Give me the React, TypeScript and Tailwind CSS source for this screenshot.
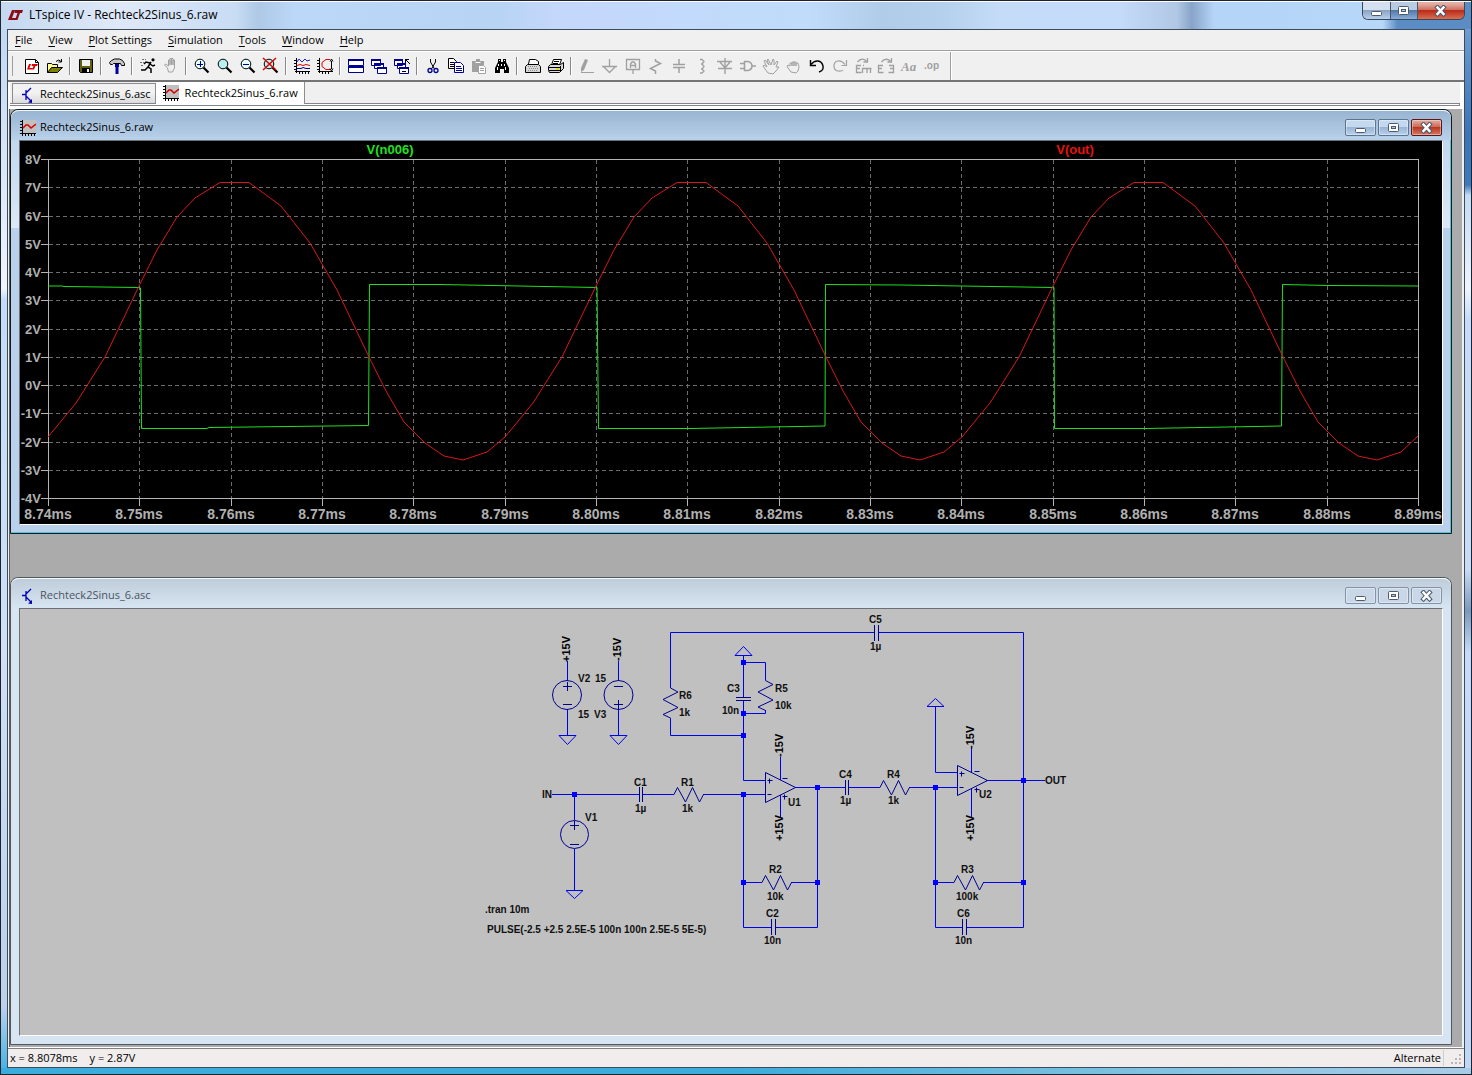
import type { ReactNode } from "react";

const BLUE = "#0000f0";
const NAVY = "#000090";
const GREY = "#a0a0a0";

/* ---------- toolbar icons ---------- */

const icons: Record<string, ReactNode> = {
  "New Schematic": (
    <>
      <path d="M1.5 1.5h10l3 3v11h-13z" fill="#fff" stroke="#000" />
      <path d="M11.5 1.5v3h3" fill="none" stroke="#000" />
      <path d="M5 6h2l-1.5 4h3l-.5 1.5h-5zM8 6h6l-1 2h-1.5l-1.5 3.5h-2l1.5-3.5h-2z" fill="#e00000" />
    </>
  ),
  Open: (
    <>
      <path d="M.5 14.5v-9h4l1 1h5v3" fill="#ffff90" stroke="#000" />
      <path d="M.5 14.5l4-5h11l-5 5z" fill="#808000" stroke="#000" />
      <path d="M9 3.5q3-3 5 0M14.5 1v3h-3" fill="none" stroke="#000" />
    </>
  ),
  Save: (
    <>
      <path d="M1.5 1.5h13v13h-12l-1-1z" fill="#606010" stroke="#000" />
      <path d="M4 2h8v6h-8z" fill="#f0f0f0" />
      <path d="M4 10h8v5h-8z" fill="#000" />
      <path d="M9 11h2v3h-2z" fill="#f0f0f0" />
    </>
  ),
  "Control Panel": (
    <>
      <path d="M.5 4.5l2-2 3-1.5h5l3 1.5 2 3v2h-3l-1-2h-7l-1 1h-2z" fill="#c8c8c8" stroke="#000" />
      <path d="M6 6h4v3h-.5v7h-3v-7h-.5z" fill="#0000a0" />
    </>
  ),
  Run: (
    <>
      <circle cx="13" cy="1.8" r="1.6" fill="#000" />
      <path d="M11 4l-3 5 3 2v4M8 9l-3 3h-4M10 5l-4-1-2 2M10 6l3 2 2-1" fill="none" stroke="#000" strokeWidth="1.5" />
      <path d="M0 4.5h4M1 7.5h3M2 1.5h4" stroke="#707070" strokeDasharray="2 1" />
    </>
  ),
  Halt: (
    <path d="M4.5 10l-3-3 1-1 3 2v-6h1.5v5-6.5h1.5v6-6h1.5v6.5-5h1.5v8l-2 4h-4z" fill="none" stroke={GREY} />
  ),
  "Zoom In": (
    <>
      <circle cx="6" cy="6" r="4.8" fill="#e8ffff" stroke="#000" />
      <path d="M3 6.5h6M6.5 3v6" stroke={NAVY} />
      <path d="M9.5 9.5l5 5" stroke="#000" strokeWidth="2.2" />
    </>
  ),
  "Zoom Box": (
    <>
      <circle cx="6" cy="6" r="4.8" fill="#b8f0f0" stroke="#000" />
      <path d="M9.5 9.5l5 5" stroke="#000" strokeWidth="2.2" />
    </>
  ),
  "Zoom Out": (
    <>
      <circle cx="6" cy="6" r="4.8" fill="#e8ffff" stroke="#000" />
      <path d="M3 6.5h6" stroke={NAVY} />
      <path d="M9.5 9.5l5 5" stroke="#000" strokeWidth="2.2" />
    </>
  ),
  "Zoom Fit": (
    <>
      <circle cx="6" cy="6" r="4.8" fill="#b8f0f0" stroke="#000" />
      <path d="M9.5 9.5l5 5" stroke="#000" strokeWidth="2.2" />
      <path d="M0 0l13 12M13 0l-13 12" stroke="#e00000" strokeWidth="1.5" />
    </>
  ),
  "Autorange Y": (
    <>
      <path d="M2.5 0v15M1 13.5h15M0 2.5h2M0 5.5h2M0 8.5h2M0 11.5h2M5.5 14v2M8.5 14v2M11.5 14v2M14.5 14v2" stroke="#000" fill="none" />
      <path d="M3 4l2-3 3 3 3-3 2 2 3-1" stroke="#2020c0" fill="none" />
      <path d="M3 7.5l3-1 3 1 3-1 4 1" stroke="#e00000" fill="none" />
      <path d="M3 10.5h4l2-1 3 1h4" stroke={NAVY} fill="none" />
    </>
  ),
  "Pick Traces": (
    <>
      <path d="M2.5 0v15M1 13.5h15M0 2.5h2M0 5.5h2M0 8.5h2M0 11.5h2M5.5 14v2M8.5 14v2M11.5 14v2" stroke="#000" fill="none" />
      <path d="M14.5 3v8M13 3.5l1.5-2.5 1.5 2.5M13 10.5l1.5 2.5 1.5-2.5" stroke="#000" fill="none" />
      <path d="M13 1.5h-4l-4 3v4l4 3h4" stroke="#e00000" fill="none" />
    </>
  ),
  "Tile Windows": (
    <>
      <path d="M.5 1.5h15v6h-15zM.5 8.5h15v6h-15z" fill="#fff" stroke={NAVY} />
      <path d="M0 1h16v2h-16zM0 8h16v2h-16z" fill={NAVY} />
    </>
  ),
  "Cascade Windows": (
    <>
      <path d="M.5 1.5h9v6h-9zM3.5 5.5h9v5h-9zM6.5 9.5h9v6h-9z" fill="#fff" stroke={NAVY} />
      <path d="M0 1h10v2h-10zM3 5h10v2h-10zM6 9h10v2h-10z" fill={NAVY} />
    </>
  ),
  "Close All Windows": (
    <>
      <path d="M.5 1.5h8v6h-8zM3.5 5.5h8v5h-8zM5.5 9.5h9v6h-9z" fill="#fff" stroke={NAVY} />
      <path d="M0 1h9v2h-9zM3 5h9v2h-9zM5 9h10v2h-10z" fill={NAVY} />
      <path d="M11 1.5h4M11.5 1v4M12 2l4 4M8 13.5h4" stroke="#000" />
    </>
  ),
  Cut: (
    <>
      <path d="M5.5 1v3l4 7M10.5 1v3l-4 7" stroke="#000" fill="none" />
      <circle cx="5" cy="12.5" r="2" fill="none" stroke={NAVY} strokeWidth="1.3" />
      <circle cx="11" cy="12.5" r="2" fill="none" stroke={NAVY} strokeWidth="1.3" />
    </>
  ),
  Copy: (
    <>
      <path d="M.5 .5h5l3 3v7h-8z" fill="#fff" stroke="#000" />
      <path d="M2 4.5h4M2 6.5h4M2 8.5h4" stroke="#000" />
      <path d="M6.5 4.5h6l3 3v7h-9z" fill="#fff" stroke={NAVY} />
      <path d="M8 8.5h5M8 10.5h6M8 12.5h6" stroke={NAVY} />
    </>
  ),
  Paste: (
    <>
      <path d="M1 3h4v-2h4v2h4v4h-5v7h-7z" fill={GREY} />
      <path d="M4.5 4.5h5" stroke="#fff" />
      <path d="M7.5 7.5h5l2 2v6h-7z" fill="#fff" stroke={GREY} />
      <path d="M9 10.5h4M9 12.5h4" stroke={GREY} />
    </>
  ),
  Find: (
    <>
      <path d="M4 1h3v3h2v-3h3v3l2 4 1 2v5h-5v-4h-4v4h-5v-5l1-2 2-4z" fill="#000" />
      <path d="M5.5 2v1M10.5 2v1M4.5 6v2M3.5 9v3M10.5 6v2M11.5 9v3M7.5 6v2" stroke="#fff" />
    </>
  ),
  "Page Setup": (
    <>
      <path d="M3.5 6l1-4.5h6l3 2v2.5" fill="#fff" stroke="#000" />
      <path d="M.5 8.5l2-2h11l2 2v6h-15z" fill="#d8d8d8" stroke="#000" />
      <path d="M3 8.5h10M4 10.5h9M3 12.5h10" stroke="#909090" strokeDasharray="1 1" />
    </>
  ),
  Print: (
    <>
      <path d="M3.5 7l2-5.5h8l-2 5.5" fill="#fff" stroke="#000" />
      <path d="M6 3.5h5M5 5.5h5" stroke="#000" />
      <path d="M.5 8.5l2-2h10l3-2v6l-4 4h-10l-1-2z" fill="#d8d8d8" stroke="#000" />
      <path d="M1 9.5h11M1 12.5h11M12.5 8v6" stroke="#000" />
      <path d="M8 10h3v2h-3z" fill="#e0e000" />
    </>
  ),
  "Draw Wire": (
    <>
      <path d="M6 1l3 1-4 10-3 2v-4z" fill={GREY} />
      <path d="M2 14.5h13" stroke={GREY} />
    </>
  ),
  Ground: <path d="M7.5 1v7M0 8.5h15M1.5 8.5l6 6 6-6" fill="none" stroke={GREY} strokeWidth="1.3" />,
  "Label Net": (
    <>
      <path d="M1.5 1.5h13v10h-13zM8 12v4" fill="none" stroke={GREY} strokeWidth="1.3" />
      <path d="M5.5 10v-4l1.5-2h2l1.5 2v4M6 7.5h4" fill="none" stroke={GREY} strokeWidth="1.3" />
    </>
  ),
  Resistor: <path d="M7.5 1v2l5 2.5-10 5 5 2.5v3" fill="none" stroke={GREY} strokeWidth="1.5" />,
  Capacitor: <path d="M8 1v5M8 10v5M2 6.5h12M2 9.5h12" fill="none" stroke={GREY} strokeWidth="1.5" />,
  Inductor: <path d="M6 1.5h2l2 2-2 2.5h-1 1l2 2.5-2 2.5h-1 1l2 2-2 2h-2" fill="none" stroke={GREY} strokeWidth="1.3" />,
  Diode: <path d="M8 0v16M0 3.5h15M3 4l5 6 5-6M1 10.5h14" fill="none" stroke={GREY} strokeWidth="1.4" />,
  Component: (
    <path d="M0 5.5h4M0 10.5h4M4.5 3v10M4 3.5h4q4 1 4 4.5t-4 4.5h-4M12 8h4" fill="none" stroke={GREY} strokeWidth="1.6" />
  ),
  Move: (
    <path d="M5 15l-3-4-2-3 1-1 3 2-3-6 1-1 4 5-2-5 1-1 3 6 2-6 1 1v5l3-4 1 1-2 5 3 0-3 4-3 3z" fill="none" stroke={GREY} />
  ),
  Drag: (
    <path d="M5 14l-3-4-1-2 1-1 2 1v-3h2v3-4h2v4-4h2v4-3h2l1 4-1 4-2 2z" fill="none" stroke={GREY} />
  ),
  Undo: (
    <>
      <path d="M2 6.5q3-4 7-3.5t5 5-4 6" fill="none" stroke="#000" strokeWidth="1.4" />
      <path d="M1.5 2v5.5h5.5" fill="none" stroke="#000" strokeWidth="1.4" />
    </>
  ),
  Redo: (
    <>
      <path d="M13 6.5q-3-4-7-3.5t-4 5 4 5 5-1" fill="none" stroke={GREY} strokeWidth="1.2" />
      <path d="M14.5 2v5.5h-5" fill="none" stroke={GREY} strokeWidth="1.2" />
    </>
  ),
  Rotate: (
    <path d="M2.5 4q4-5 9-1M12.5 0v4h-4M6 7.5h-4.5v7h5M1 10.5h4M7.5 15v-4.5h9M12 10v5M15.5 10v5M8 7.5h1" fill="none" stroke={GREY} strokeWidth="1.3" />
  ),
  Mirror: (
    <path d="M3.5 4q4-5 9-1M13.5 0v4h-4M5 7.5h-4.5v7h5M0 10.5h4M11 7.5h4.5v7h-5M12 10.5h4" fill="none" stroke={GREY} strokeWidth="1.3" />
  ),
  Text: (
    <text x="0" y="13" fontSize="13" fontStyle="italic" fontWeight="bold" fontFamily="Liberation Serif, serif" fill={GREY}>Aa</text>
  ),
  "SPICE Directive": (
    <text x="0" y="11" fontSize="10" fontFamily="Liberation Sans, sans-serif" fontWeight="bold" fill={GREY}>.op</text>
  ),
};

const toolGroups = [
  ["New Schematic", "Open"],
  ["Save"],
  ["Control Panel"],
  ["Run", "Halt"],
  ["Zoom In", "Zoom Box", "Zoom Out", "Zoom Fit"],
  ["Autorange Y", "Pick Traces"],
  ["Tile Windows", "Cascade Windows", "Close All Windows"],
  ["Cut", "Copy", "Paste", "Find"],
  ["Page Setup", "Print"],
  [
    "Draw Wire", "Ground", "Label Net", "Resistor", "Capacitor", "Inductor", "Diode", "Component",
    "Move", "Drag", "Undo", "Redo", "Rotate", "Mirror", "Text", "SPICE Directive",
  ],
];

const menus = ["File", "View", "Plot Settings", "Simulation", "Tools", "Window", "Help"];

function Toolbar() {
  return (
    <div className="flex h-[31px] items-stretch border-b-2 border-[#747474] border-t border-t-white pl-1">
      <div className="my-1 mr-[7px] w-px bg-[#a0a0a0]" />
      {toolGroups.map((group, i) => (
        <div key={i} className="flex items-center">
          {i > 0 && <div className="mx-[3px] h-[18px] w-0.5 border-l border-[#888] bg-white" />}
          {group.map((name) => (
            <button key={name} aria-label={name} className="flex h-[22px] w-[23px] items-center justify-center">
              <svg width="16" height="16" viewBox="0 0 16 16" className="overflow-visible">
                {icons[name]}
              </svg>
            </button>
          ))}
        </div>
      ))}
      <div className="ml-[7px] w-0.5 border-l border-[#a0a0a0] bg-white" />
    </div>
  );
}

/* ---------- small document icons ---------- */

function RawIcon() {
  return (
    <svg width="16" height="16" viewBox="0 0 16 16" className="shrink-0">
      <path d="M3 0h13v13h-13z" fill="#c0c0c0" />
      <path d="M2.5 0v16M0 13.5h16M0 1.5h2M0 4.5h2M0 7.5h2M0 10.5h2M5.5 14v2M8.5 14v2M11.5 14v2M14.5 14v2" stroke="#000" />
      <path d="M3 8l3-3h2l3 3 5-4" fill="none" stroke="#d80000" strokeWidth="1.5" />
    </svg>
  );
}

function AscIcon() {
  return (
    <svg width="16" height="16" viewBox="0 0 16 16" className="shrink-0">
      <path d="M6 3v10M2 7.5h4M6 6l5-5M6 9l5 5" fill="none" stroke="#0000b8" strokeWidth="1.3" />
      <path d="M12 16v-4l-4 3.5z" fill="#0000b8" />
    </svg>
  );
}

/* ---------- windows ---------- */

type Glyph = "Minimize" | "Maximize" | "Close";

function WindowGlyph({ kind }: { kind: Glyph }) {
  return (
    <svg width="14" height="12" viewBox="0 0 14 12">
      {kind === "Minimize" && <rect x="1.5" y="6.5" width="10" height="4" rx="1" fill="#fff" stroke="#4c5a70" />}
      {kind === "Maximize" && (
        <>
          <rect x="1.5" y="1.5" width="10" height="8" rx="1" fill="#fff" stroke="#4c5a70" />
          <rect x="4.5" y="4.5" width="4" height="2" fill="#b8c8dc" stroke="#4c5a70" />
        </>
      )}
      {kind === "Close" && (
        <>
          <path d="M3.5 2.5l6 6.5M9.5 2.5l-6 6.5" stroke="#4c5a70" strokeWidth="4.5" strokeLinecap="square" />
          <path d="M3.5 2.5l6 6.5M9.5 2.5l-6 6.5" stroke="#fff" strokeWidth="2.5" strokeLinecap="square" />
        </>
      )}
    </svg>
  );
}

const frameButtons: Glyph[] = ["Minimize", "Maximize", "Close"];

type ChildProps = {
  title: string;
  icon: ReactNode;
  active?: boolean;
  children: ReactNode;
};

function ChildWindow({ title, icon, active, children }: ChildProps) {
  const frame = active
    ? "rounded-t-lg border border-[#101c24] bg-[linear-gradient(#b9d1ea,#dce8f6_28%,#b9d1ea_28%)] shadow-[inset_-1px_-1px_0_#4cc4dc]"
    : "rounded-t-lg border border-[#505860] bg-[#d7e4f2]";
  const bar = active
    ? "bg-[linear-gradient(#99b4d1,#b9d1ea)] text-black"
    : "bg-[linear-gradient(#bfcddb,#d7e4f2)] text-[#4a545e]";
  const button = active
    ? "border-[#5c7690] bg-[linear-gradient(#c4d8ee_45%,#9ab6d4_50%,#b8d0ea)]"
    : "border-[#8292ac] bg-[#c9d7e7]";
  const closeButton = active
    ? "border-[#581820] bg-[linear-gradient(#e0a090_10%,#cf6a58_45%,#b83820_50%,#d87860)]"
    : button;

  return (
    <section className={frame}>
      <header className={`flex h-[30px] items-center rounded-t-lg border-t border-white/80 px-[9px] pt-1 ${bar}`}>
        {icon}
        <h2 className="ml-1 flex-1">{title}</h2>
        <div className="flex gap-0.5">
          {frameButtons.map((kind) => (
            <button
              key={kind}
              aria-label={kind}
              className={`flex h-[17px] w-[31px] items-center justify-center rounded-xs border shadow-[inset_0_0_0_1px_#ffffff60] ${kind === "Close" ? closeButton : button}`}
            >
              <WindowGlyph kind={kind} />
            </button>
          ))}
        </div>
      </header>
      <div className="mx-2 mb-2 border border-t-[#6c7074] border-l-[#6c7074] border-r-white border-b-white">
        {children}
      </div>
    </section>
  );
}

/* ---------- waveform plot ---------- */

const PLOT = { left: 48.5, right: 1418.5, top: 159.5, bottom: 498.5 };
const volts = [8, 7, 6, 5, 4, 3, 2, 1, 0, -1, -2, -3, -4];
const ticks = Array.from({ length: 16 }, (_, i) => ({
  label: `${(8.74 + i * 0.01).toFixed(2)}ms`,
  x: Math.round(48 + (i * 1370) / 15) + 0.5,
}));
const voltY = (v: number) => Math.round(159 + ((8 - v) * 339) / 12) + 0.5;

// One 50us period of V(out), in plot units
const period = [
  [48, 437], [76, 403], [105, 357], [139, 286], [157, 250], [177, 217], [195, 198], [220, 182.5], [249, 182.5],
  [281, 206], [310, 243], [337, 290], [369, 357], [386, 391], [404, 422], [425, 443], [444, 456], [463, 460], [487, 452],
];
const outTrace = [0, 1, 2]
  .flatMap((n) => period.map(([x, y]) => [x + n * 457, y]))
  .concat([[1418, 436]])
  .map((p) => p.join(","))
  .join(" ");
const squareTrace =
  "48,286 62,286 64,286.5 139,287.5 140.5,288 141.5,428.5 207,428.5 209,427.5 368.5,425.5 369.5,284.5 440,284.5 597,287.5 598.5,428.5 690,428.5 825,426 825.5,284.5 900,285 1054,287.5 1054.5,428.5 1146,428.5 1281.5,426 1282.5,284.5 1330,285.5 1418,286";

function Plot() {
  return (
    <svg viewBox="20 141 1422 383" className="block w-full bg-black font-['Liberation_Sans',sans-serif]" role="img" aria-label="Waveforms">
      <g stroke="#6c6c6c" strokeDasharray="4 3" shapeRendering="crispEdges">
        {volts.slice(1, -1).map((v) => (
          <line key={v} x1={PLOT.left} x2={PLOT.right} y1={voltY(v)} y2={voltY(v)} />
        ))}
        {ticks.slice(1, -1).map((t) => (
          <line key={t.label} x1={t.x} x2={t.x} y1={PLOT.top} y2={PLOT.bottom} />
        ))}
      </g>
      <g stroke="#b4b4b4" fill="none" shapeRendering="crispEdges">
        <rect x={PLOT.left} y={PLOT.top} width={PLOT.right - PLOT.left} height={PLOT.bottom - PLOT.top} />
        {volts.map((v) => (
          <line key={v} x1="41" x2="48" y1={voltY(v)} y2={voltY(v)} />
        ))}
        {ticks.map((t) => (
          <line key={t.label} x1={t.x} x2={t.x} y1="498" y2="506" />
        ))}
      </g>
      <g fill="#b0b0b0" fontWeight="bold">
        {volts.map((v) => (
          <text key={v} x="41" y={voltY(v) + 4.5} fontSize="13" textAnchor="end">{v}V</text>
        ))}
        {ticks.map((t) => (
          <text key={t.label} x={t.x - 0.5} y="519" fontSize="14" textAnchor="middle">{t.label}</text>
        ))}
      </g>
      <g fontSize="13" fontWeight="bold" textAnchor="middle">
        <text x="390" y="154" fill="#20e020">V(n006)</text>
        <text x="1075" y="154" fill="#e81010">V(out)</text>
      </g>
      <polyline points={squareTrace} fill="none" stroke="#20e020" />
      <polyline points={outTrace} fill="none" stroke="#d81818" />
    </svg>
  );
}

/* ---------- schematic ---------- */

const nodes = [
  [743, 662], [743, 713], [743, 735], [574, 794], [743, 794], [817, 787], [743, 882], [817, 882],
  [935, 787], [935, 882], [1023, 780], [1023, 882],
];

const labels: [number, number, string][] = [
  [578, 682, "V2"], [595, 682, "15"], [578, 718, "15"], [594, 718, "V3"],
  [679, 699, "R6"], [679, 716, "1k"], [727, 692, "C3"], [722, 714, "10n"],
  [775, 692, "R5"], [775, 709, "10k"], [788, 806, "U1"], [542, 798, "IN"],
  [634, 786, "C1"], [635, 812, "1µ"], [681, 786, "R1"], [682, 812, "1k"],
  [585, 821, "V1"], [769, 873, "R2"], [767, 900, "10k"], [766, 917, "C2"], [764, 944, "10n"],
  [839, 778, "C4"], [840, 804, "1µ"], [887, 778, "R4"], [888, 804, "1k"],
  [979, 798, "U2"], [1045, 784, "OUT"], [961, 873, "R3"], [956, 900, "100k"],
  [957, 917, "C6"], [955, 944, "10n"], [869, 623, "C5"], [870, 650, "1µ"],
  [485, 913, ".tran 10m"], [487, 933, "PULSE(-2.5 +2.5 2.5E-5 100n 100n 2.5E-5 5E-5)"],
];

const supplies: [number, number, string][] = [
  [570, 662, "+15V"], [621, 661, "-15V"], [783, 757, "-15V"], [783, 841, "+15V"], [974, 749, "-15V"], [974, 841, "+15V"],
];

function Zigzag({ x, y, vertical }: { x: number; y: number; vertical?: boolean }) {
  return vertical ? (
    <path d={`M${x} ${y}l7.5 4-15 7.5 15 8-15 7 7.5 3.5`} />
  ) : (
    <path d={`M${x} ${y}l3.5-7 8 14.5 7-14.5 7 14.5 4-7.5`} />
  );
}

function OpAmp({ x, y }: { x: number; y: number }) {
  return (
    <path d={`M${x} ${y - 15}v30l30-15zM${x + 2} ${y - 7}h5M${x + 4} ${y - 9}v5M${x + 2} ${y + 7}h4M${x + 17} ${y - 9}h5M${x + 17} ${y + 9}h5M${x + 19} ${y + 7}v5`} />
  );
}

function Schematic() {
  return (
    <svg viewBox="20 609 1422 426" className="block w-full bg-[#c0c0c0] font-['Liberation_Sans',sans-serif]" role="img" aria-label="Schematic">
      <g fill="none" stroke={BLUE}>
        {/* power sources */}
        <path d="M567.5 661v20M567.5 709v26M618.5 661v20M618.5 709v26" />
        {/* feedback through C5 and R6 */}
        <path d="M670.5 688v-55.5h204M878 632.5h145.5v295h-57M962 927.5h-26.5v-140M670.5 718v17.5h73" />
        {/* C3 and R5 to the U1 input */}
        <path d="M743.5 655v42M743.5 701v79.5h22M743.5 662.5h22v18M765.5 710v3.5h-22" />
        {/* input branch */}
        <path d="M552 794.5h87M643 794.5h31M703 794.5h62M574.5 794v26M574.5 849v41" />
        {/* U1 stage */}
        <path d="M780.5 757v23M780.5 795v22M743.5 794v133.5h28M776 927.5h41.5v-140M743 882.5h19M791 882.5h26M795 787.5h50M849 787.5h31M909 787.5h48" />
        {/* U2 stage */}
        <path d="M935.5 706v66.5h22M971.5 748v24M971.5 788v29M986 780.5h59M935 882.5h19M983 882.5h40" />
        {/* grounds */}
        <path d="M559 735.5h17l-8.5 9zM610 735.5h17l-8.5 9zM566 890.5h17l-8.5 8zM735 655.5h17l-8.5-9zM927 706.5h17l-8.5-8z" />
      </g>
      <g fill="none" stroke={NAVY}>
        <circle cx="567" cy="695" r="14.5" />
        <circle cx="618.5" cy="695" r="14.5" />
        <circle cx="574.5" cy="834.5" r="14" />
        <path d="M563 686.5h9M567.5 682v9M563 704.5h9M614 686.5h9M614 704.5h9M618.5 700v9M570 825.5h9M574.5 821v9M570 844.5h9" />
        <Zigzag x={670.5} y={688} vertical />
        <Zigzag x={765.5} y={680.5} vertical />
        <Zigzag x={674} y={794.5} />
        <Zigzag x={762} y={882.5} />
        <Zigzag x={880} y={787.5} />
        <Zigzag x={954} y={882.5} />
        {/* capacitor plates */}
        <path d="M736 697.5h15M736 700.5h15M639.5 787v15M642.5 787v15M771.5 919v16M775.5 919v16M845.5 780v15M848.5 780v15M962.5 919v16M966.5 919v16M874.5 625v16M878.5 625v16" />
        <OpAmp x={765.5} y={787.5} />
        <OpAmp x={957.5} y={780.5} />
      </g>
      {nodes.map(([x, y]) => (
        <rect key={`${x}-${y}`} x={x - 2} y={y - 2} width="5" height="5" fill="#0000ff" />
      ))}
      <g fill="#101010" fontWeight="bold" fontSize="10">
        {labels.map(([x, y, s]) => (
          <text key={`${x}-${y}`} x={x} y={y}>{s}</text>
        ))}
      </g>
      <g fill="#000" fontWeight="bold" fontSize="11">
        {supplies.map(([x, y, s]) => (
          <text key={`${x}-${y}`} transform={`translate(${x} ${y}) rotate(-90)`}>{s}</text>
        ))}
      </g>
    </svg>
  );
}

/* ---------- main window ---------- */

export default function App() {
  return (
    <div className="flex min-h-screen flex-col border border-[#1c2430] bg-[#b9d4f2] font-['Open_Sans',sans-serif] text-[11px] text-black">
      <header className="flex h-7 items-start border-t border-white bg-[linear-gradient(90deg,#c4d8f0,#dfe9f8_8%,#c8dcf4_16%,#aec8e6_17.5%,#bcd8f8_20%,#b8d4f4_34%,#c4d8fc_38%,#c0dcfa_55%,#b0cce8_60%,#b4d0ec_64%,#c4dcf8_68%,#c4dcfa_76%,#b0c8e4_80%,#88a4c8_81%,#b4d4f8_82.5%,#b8d8f8_94%,#5c8cc4_95%)] pl-[7px] pr-1.5">
        <div className="flex h-[26px] flex-1 items-center gap-1.5">
          <svg width="15" height="12" viewBox="0 0 15 12">
            <path d="M4 1h3l-3 8h5l-1 2h-8zM7 1h8l-1 3h-2l-2.5 7h-2.5l2.5-7h-3z" fill="#8c0c14" />
          </svg>
          <h1 className="text-xs">LTspice IV - Rechteck2Sinus_6.raw</h1>
        </div>
        <div className="flex h-[18px] overflow-hidden rounded-b-md border border-t-0 border-[#38485c]">
          <button aria-label="Minimize" className="flex w-7 items-center justify-center border-r border-[#48586c] bg-[linear-gradient(#d4e0f0_45%,#8ca4c4_50%,#b8d0ec)]">
            <WindowGlyph kind="Minimize" />
          </button>
          <button aria-label="Maximize" className="flex w-[27px] items-center justify-center border-r border-[#48586c] bg-[linear-gradient(#b8cce4_45%,#5478a8_50%,#88acd8)]">
            <WindowGlyph kind="Maximize" />
          </button>
          <button aria-label="Close" className="flex w-[46px] items-center justify-center bg-[linear-gradient(#e4b0a4_10%,#d07060_45%,#b82c18_50%,#dc6c50)]">
            <WindowGlyph kind="Close" />
          </button>
        </div>
      </header>

      <div className="flex flex-1">
        <div className="w-1.5 bg-[linear-gradient(#c0d8f4,#f0f4fc_25%,#c4dcf8_26%,#cfe0f6_60%,#bcd0ec_94%,#48b4e4)]" />
        <div className="flex min-w-0 flex-1 flex-col border border-[#3c4c5c] bg-[#f0f0f0]">
          <nav className="flex h-[21px] items-center gap-4 border-b border-[#a0a0a0] px-[7px]">
            {menus.map((m) => (
              <button key={m}>
                <span className="underline underline-offset-2">{m[0]}</span>
                {m.slice(1)}
              </button>
            ))}
          </nav>

          <Toolbar />

          <div className="h-[27px] bg-white">
            <div className="ml-0.5 mr-1 flex h-6 flex-col bg-[#f0f0f0]">
              <div role="tablist" className="flex h-[22px] items-end border-b border-[#84848c] pl-0.5">
                <button role="tab" className="flex h-5 items-center gap-1 border border-b-0 border-[#8c8c94] bg-[linear-gradient(#f2f2f2_45%,#dcdcdc)] pl-[7px] pr-1 pt-0.5">
                  <AscIcon />
                  <span>Rechteck2Sinus_6.asc</span>
                </button>
                <button role="tab" aria-selected className="-mb-px flex h-[22px] items-center gap-1.5 border-r border-[#8c8c94] bg-white pl-[7px] pr-1.5">
                  <RawIcon />
                  <span>Rechteck2Sinus_6.raw</span>
                </button>
              </div>
              <div className="h-0.5 border-b border-r border-[#84848c] bg-white" />
            </div>
          </div>

          <main className="ml-px mr-0.5 flex flex-1 flex-col gap-[43px] border-l border-[#606060] bg-[#ababab] pb-0.5 pr-2.5">
            <ChildWindow title="Rechteck2Sinus_6.raw" icon={<RawIcon />} active>
              <Plot />
            </ChildWindow>
            <ChildWindow title="Rechteck2Sinus_6.asc" icon={<AscIcon />}>
              <Schematic />
            </ChildWindow>
          </main>

          <footer className="h-5 border-t border-white">
            <div className="flex h-full items-center border-t border-[#808080] bg-[#f1edec] pl-0.5">
              <span>x = 8.8078ms</span>
              <span className="ml-3 flex-1">y = 2.87V</span>
              <span className="h-4 border-r border-[#d0d0d0] pr-0.5">Alternate</span>
              <svg width="20" height="16" viewBox="0 0 20 16" fill="#b8b8b8">
                <path d="M15 4h2v2h-2zM11 8h2v2h-2zM15 8h2v2h-2zM7 12h2v2h-2zM11 12h2v2h-2zM15 12h2v2h-2z" />
              </svg>
            </div>
          </footer>
        </div>
        <div className="w-1.5 bg-[linear-gradient(#6c9cd0,#3c74b8_10%,#4078bc_15%,#c4dcf4_16%,#f0f4fc_25%,#c4dcf8_28%,#c8dcf6_52%,#7c98bc_56%,#c4dcf8_60%,#c0d8f4)]" />
      </div>
      <div className="h-1.5 bg-[linear-gradient(90deg,#3cacdc_50%,#7cc0e0_75%,#a8cce8)]" />
    </div>
  );
}
